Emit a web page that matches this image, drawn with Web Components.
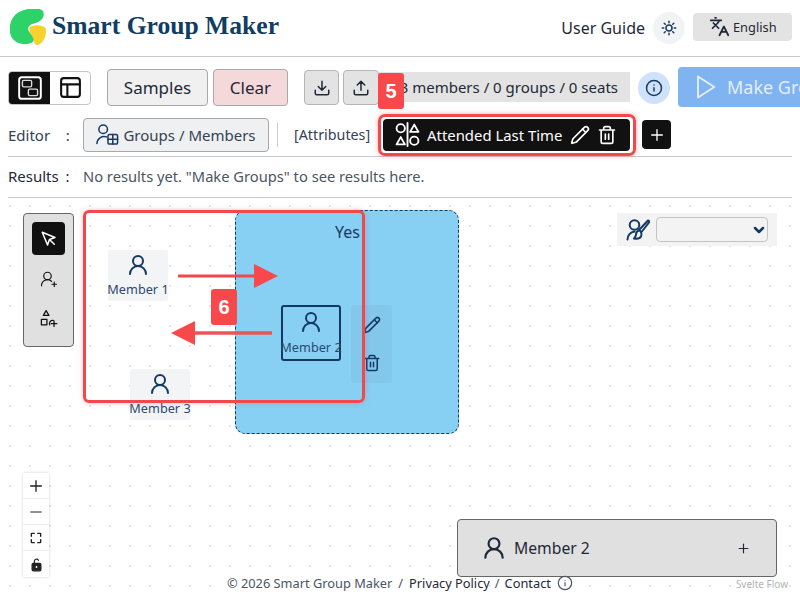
<!DOCTYPE html>
<html lang="en"><head><meta charset="utf-8"><title>Smart Group Maker</title>
<style>
html,body{margin:0;padding:0;width:800px;height:600px;overflow:hidden;background:#fff;font-family:"Noto Sans","Liberation Sans",sans-serif;color:#1f2937}
body{display:flex;flex-direction:column}
</style></head><body>
<sg-header></sg-header>
<sg-toolbar></sg-toolbar>
<sg-editor></sg-editor>
<sg-results></sg-results>
<sg-canvas></sg-canvas>
<script>
const P={
user:'<circle cx="12" cy="8" r="5"/><path d="M20 21a8 8 0 0 0-16 0"/>',
userplus:'<path d="M2 21a8 8 0 0 1 13.3-6"/><circle cx="10" cy="8" r="5"/><path d="M19 16v6M22 19h-6"/>',
shapesplus:'<path d="M9 2l3.500 6h-7z"/><rect x="3" y="13" width="7" height="7"/><path d="M18 14.500a4 4 0 0 0-4.500 5.500"/><path d="M19 15v7M15.500 18.500h7"/>',
groupmem:'<circle cx="7.500" cy="6.500" r="4.500"/><path d="M1 21.500a7.500 7.500 0 0 1 10-7"/><rect x="12.500" y="12" width="10" height="10" rx="1.500"/><path d="M17.500 12v10M12.500 17h10"/>',
cursor:'<path d="M3 3l7.070 16.970 2.510-7.390 7.390-2.510L3 3z"/><path d="M13 13l6 6"/>',
pencil:'<path d="M21.170 6.810a1 1 0 0 0-3.980-3.990L3.840 16.170a2 2 0 0 0-.5.830l-1.320 4.350a.5.5 0 0 0 .62.620l4.350-1.320a2 2 0 0 0 .83-.5z"/><path d="m15 5 4 4"/>',
trash:'<path d="M3 6h18M19 6v14c0 1-1 2-2 2H7c-1 0-2-1-2-2V6M8 6V4c0-1 1-2 2-2h4c1 0 2 1 2 2v2M10 11v6M14 11v6"/>',
download:'<path d="M21 15v4a2 2 0 0 1-2 2H5a2 2 0 0 1-2-2v-4M7 10l5 5 5-5M12 15V3"/>',
upload:'<path d="M21 15v4a2 2 0 0 1-2 2H5a2 2 0 0 1-2-2v-4M17 8l-5-5-5 5M12 3v12"/>',
sun:'<circle cx="12" cy="12" r="4"/><path d="M12 3v2M12 19v2M3 12h2M19 12h2M5.600 5.600l1.400 1.400M17 17l1.400 1.400M5.600 18.400L7 17M17 7l1.400-1.400"/>',
lang:'<path d="M5 8l6 6M4 14l6-6 2-3M2 5h12M7 2h1M22 22l-5-10-5 10M14 18h6"/>',
play:'<path d="M6 3l14 9-14 9z"/>',
info:'<circle cx="12" cy="12" r="10"/><path d="M12 16v-4.500M12 8h.01"/>',
attrs:'<circle cx="5.500" cy="6" r="4"/><path d="M1.500 21.500l4-7 4 7zM18.500 2.500l4 7h-8z"/><circle cx="18.500" cy="18" r="4"/><path d="M12 1v22"/>',
board:'<rect x="2" y="2" width="20" height="20" rx="2.500"/><g stroke-width="1.300" opacity=".85"><rect x="5" y="5" width="8.500" height="6" rx="1.200"/><rect x="10.500" y="13" width="8.500" height="6" rx="1.200"/></g>',
table:'<rect x="3" y="3" width="18" height="18" rx="2.500"/><path d="M3 9h18M9 9v12"/>',
plus:'<path d="M12 4v16M4 12h16"/>',
minus:'<path d="M4 12h16"/>',
fit:'<path d="M4 9V5a1 1 0 0 1 1-1h4M15 4h4a1 1 0 0 1 1 1v4M20 15v4a1 1 0 0 1-1 1h-4M9 20H5a1 1 0 0 1-1-1v-4"/>',
lock:'<path d="M8.500 10V7a3.500 3.500 0 0 1 6.500-1.800" /><rect x="5" y="10" width="14" height="12" rx="2" fill="currentColor"/><circle cx="12" cy="16" r="1.500" fill="#fff" stroke="none"/>',
userbrush:'<circle cx="8.500" cy="7" r="4.800"/><path d="M1.500 21.500a8 8 0 0 1 7-8"/><path d="M22 2.500c1 0 1.500 1 1 2l-7.500 9.500-2.500-2z"/><path d="M13 12.500c-2 .5-3 2-3 4 0 2-1 3-2 4 3 .5 6 0 7-2 .7-1.500.7-3 0-4"/>'
};
class SgIcon extends HTMLElement{
  connectedCallback(){
    const s=this.getAttribute('size')||20, w=this.getAttribute('sw')||2;
    this.attachShadow({mode:'open'}).innerHTML=`<style>:host{display:inline-flex;flex:none;line-height:0}svg{display:block}</style>
    <svg xmlns="http://www.w3.org/2000/svg" width="${s}" height="${s}" viewBox="0 0 24 24" fill="none" stroke="currentColor" stroke-width="${w}" stroke-linecap="round" stroke-linejoin="round">${P[this.getAttribute('name')]}</svg>`;
  }
}
customElements.define('sg-icon',SgIcon);
function def(tag,html){
  customElements.define(tag,class extends HTMLElement{
    constructor(){super();this.attachShadow({mode:'open'}).innerHTML=html}
  });
}
def('sg-btn',`<style>
:host{display:inline-flex;align-items:center;justify-content:center;gap:6px;box-sizing:border-box;height:37px;padding:0 17px;background:#f0f0f0;border:1px solid #a8a8a8;border-radius:4px;font-size:17px;color:#1f2937;flex:none}
:host([tone=red]){background:#f5d9da}
:host([icon]){width:35px;height:35px;padding:0;background:#e3e3e3;border-color:#b5b5b5}
</style><slot></slot>`);
def('sg-badge',`<style>
:host{position:absolute;display:flex;align-items:center;justify-content:center;width:26px;height:36px;background:#f9484c;border-radius:3px;color:#fff;font:700 20px "Liberation Sans",sans-serif;z-index:6}
</style><slot></slot>`);
def('sg-header',`<style>
:host{display:flex;align-items:center;box-sizing:border-box;height:57px;padding:0 8px 1px 10px;border-bottom:1px solid #c8c8c8;flex:none}
svg{display:block;flex:none}
h1{margin:0 0 3px 6px;font:700 25.600px "Liberation Serif",serif;color:#0f3d63;flex:1;white-space:nowrap}
.guide{font-size:16px;color:#1f2937;margin-right:8px}
.theme{width:32px;height:32px;border-radius:50%;background:#f1f3f5;display:flex;align-items:center;justify-content:center;margin-right:8px;color:#1e3a5f}
.lang{box-sizing:border-box;width:99px;height:28px;border-radius:4px;background:#e3e3e3;display:flex;align-items:center;gap:3px;padding:0 0 0 16px;font-size:12.800px;color:#1f2937;margin-top:-2px}
</style>
<svg width="36" height="37" viewBox="10 10 36 37"><path fill="#2dd268" d="M43 12C39 8 27 9 19 13C10 18 8 30 11 37C14 44 24 47 31 44C35 42 35 38 31 35C27 31 27 27 32 25C39 24 46 19 43 12Z"/><path fill="#f7d22c" d="M30 28C35 25 46 26 46 31C46 37 44 42 40 45C37 47 34 46 34 42C34 38 27 32 30 28Z"/></svg>
<h1>Smart Group Maker</h1>
<span class="guide">User Guide</span>
<span class="theme"><sg-icon name="sun" size="18"></sg-icon></span>
<span class="lang"><sg-icon name="lang" size="21"></sg-icon>English</span>`);
def('sg-toolbar',`<style>
:host{display:flex;align-items:center;box-sizing:border-box;height:53px;padding:8px 0 0 8px;flex:none;overflow:hidden;color:#1f2937}
.seg{display:flex;box-sizing:border-box;width:83px;height:34px;border:1px solid #c4c4c4;border-radius:4px;overflow:hidden;margin-right:16px;flex:none}
.seg span{display:flex;align-items:center;justify-content:center;color:#111}
.seg span:first-child{width:41px;background:#111;color:#fff}
.seg span:last-child{flex:1}
sg-btn.s{width:101px;padding:0;margin-right:5px}
sg-btn.c{width:75px;padding:0;margin-right:16px}
sg-btn.u{margin-right:4px}
.stat{box-sizing:border-box;width:251px;height:30px;background:#e3e3e3;display:flex;align-items:center;justify-content:flex-end;padding-right:12px;font-size:15px;margin-top:-1px;white-space:nowrap;overflow:hidden;flex:none}
.info{width:32px;height:32px;border-radius:50%;background:#cfe2fb;display:flex;align-items:center;justify-content:center;margin:0 8px;color:#173a63;flex:none}
.make{box-sizing:border-box;width:140px;height:40px;background:#7fb4f1;border-radius:4px;color:#e4eefb;display:flex;align-items:center;gap:8px;padding-left:13px;font-size:18px;white-space:nowrap;margin-top:-1px;flex:none;overflow:hidden}
</style>
<div class="seg"><span><sg-icon name="board" size="26" sw="1.800"></sg-icon></span><span><sg-icon name="table" size="25" sw="2"></sg-icon></span></div>
<sg-btn class="s">Samples</sg-btn><sg-btn class="c" tone="red">Clear</sg-btn>
<sg-btn icon class="u"><sg-icon name="download" size="18"></sg-icon></sg-btn>
<sg-btn icon style="width:36px"><sg-icon name="upload" size="18"></sg-icon></sg-btn>
<div class="stat">3 members / 0 groups / 0 seats</div>
<span class="info"><sg-icon name="info" size="18"></sg-icon></span>
<div class="make"><sg-icon name="play" size="28" sw="1.600"></sg-icon>Make Groups</div>`);
def('sg-editor',`<style>
:host{display:flex;align-items:center;box-sizing:border-box;height:47px;margin:0 8px;border-bottom:1px solid #c8c8c8;padding-top:3px;flex:none;font-size:15px;color:#374151;position:relative}
.lb{width:75px;white-space:pre;flex:none}
sg-btn{width:186px;height:34px;font-size:15px;padding:0;background:#eef0f2;color:#374151;gap:4px}
sg-btn sg-icon{color:#1b3a63}
.sep{width:1px;height:24px;background:#ccc;margin:0 16px 0 8px}
.at{width:89px;font-size:14.300px;color:#374151;white-space:nowrap}
.chip{box-sizing:border-box;width:247px;height:32px;background:#111;border-radius:4px;color:#fff;display:flex;align-items:center;padding-left:12px;font-size:14.900px;gap:7px;white-space:nowrap}
.chip .t{margin-right:1px}
.pl{width:29px;height:29px;background:#111;border-radius:4px;color:#fff;display:flex;align-items:center;justify-content:center;margin-left:12px}
.ring{position:absolute;left:370px;top:4px;width:258px;height:42px;box-sizing:border-box;border:3px solid #f0484c;border-radius:7px;box-shadow:0 0 5px rgba(240,72,76,.45);z-index:5}
</style>
<span class="lb">Editor    :</span>
<sg-btn><sg-icon name="groupmem" size="23" sw="1.600"></sg-icon>Groups / Members</sg-btn>
<span class="sep"></span><span class="at">[Attributes]</span>
<div class="chip"><sg-icon name="attrs" size="25" sw="1.800"></sg-icon><span class="t">Attended Last Time</span><sg-icon name="pencil" size="20"></sg-icon><sg-icon name="trash" size="20"></sg-icon></div>
<span class="pl"><sg-icon name="plus" size="16"></sg-icon></span>
<span class="ring"></span>
<sg-badge style="left:370px;top:-37px">5</sg-badge>`);
def('sg-results',`<style>
:host{display:flex;align-items:center;box-sizing:border-box;height:41px;margin:0 8px;border-bottom:1px solid #c8c8c8;padding-bottom:2px;flex:none;font-size:15px;color:#374151}
b{font-weight:400;width:75px;color:#1f2937;flex:none;word-spacing:3px}
span{font-size:14.700px;color:#4b5563;white-space:nowrap}
</style><b>Results :</b><span>No results yet. "Make Groups" to see results here.</span>`);
def('sg-node',`<style>
:host{position:absolute;box-sizing:border-box;width:60px;height:51px;background:#f3f4f6;border-radius:2px;display:flex;flex-direction:column;align-items:center;padding-top:3px;color:#123a63;font-size:12.700px;white-space:nowrap}
:host([sel]){background:transparent;border:2px solid #123a63;height:56px;padding-top:3px;border-radius:3px}
:host([sel]) span{margin-top:4px}
span{line-height:18px;margin-top:3px;color:#2b4a6f}
</style><sg-icon name="user" size="24"></sg-icon><span><slot></slot></span>`);
def('sg-canvas',`<style>
:host{display:block;position:relative;flex:1;overflow:hidden;background-color:#fff;background-image:radial-gradient(circle,#e6e6e6 1px,transparent 1.300px);background-size:20px 20px;background-position:0 -2px;color:#111}
.tools{position:absolute;left:23px;top:15px;width:51px;height:134px;box-sizing:border-box;background:#e0e0e0;border:1px solid #666;border-radius:4px;display:flex;flex-direction:column;align-items:center;padding-top:8px;gap:7px}
.tools span{width:33px;height:33px;border-radius:4px;display:flex;align-items:center;justify-content:center}
.tools .on{background:#111;color:#fff}
.group{position:absolute;left:235px;top:12px;width:224px;height:224px;box-sizing:border-box;background:#87cff3;border:1px dashed #123a63;border-radius:10px;color:#1e3a5f;display:flex;justify-content:flex-end;padding:10px 98px 0 0;font-size:16px}
.ntb{position:absolute;left:351px;top:107px;width:41px;height:78px;background:rgba(90,120,140,.08);border-radius:3px;display:flex;flex-direction:column;align-items:center;justify-content:center;gap:20px;color:#123a63}
.anno{position:absolute;left:83px;top:12px;width:282px;height:193px;box-sizing:border-box;border:3px solid #f0484c;border-radius:6px;box-shadow:0 0 5px rgba(240,72,76,.35);z-index:4}
svg.arrows{position:absolute;left:0;top:0;z-index:4}
.sel{position:absolute;left:617px;top:15px;width:160px;height:33px;background:#f3f3f3;display:flex;align-items:center;padding-left:9px;gap:6px;color:#123a63;box-sizing:border-box}
.sel .box{width:112px;height:25px;box-sizing:border-box;border:1px solid #c4c4c4;border-radius:4px;display:flex;align-items:center;justify-content:flex-end;padding-right:1px}
.ctl{position:absolute;left:23px;top:275px;width:26px;background:#fff;box-shadow:0 0 3px rgba(0,0,0,.18);display:flex;flex-direction:column}
.ctl span{height:26px;box-sizing:border-box;display:flex;align-items:center;justify-content:center;border-bottom:1px solid #eee;color:#222}
.member{position:absolute;left:457px;top:321px;width:320px;height:58px;box-sizing:border-box;background:#e0e0e0;border:1px solid #666;border-radius:4px;display:flex;align-items:center;padding:0 26px 0 23px;font-size:15.700px;color:#1f2937;gap:7px;z-index:1}
.member .n{flex:1}
footer{position:absolute;left:227px;top:376px;font-size:12.800px;color:#4b5563;white-space:nowrap;display:flex;align-items:center;gap:6px;z-index:2}
footer a{color:#1f2937}
.sf{position:absolute;right:12px;top:379px;font:10px "Noto Sans",sans-serif;color:#b4b4b4}
</style>
<div class="group">Yes</div>
<sg-node style="left:108px;top:52px">Member 1</sg-node>
<sg-node sel style="left:281px;top:107px">Member 2</sg-node>
<sg-node style="left:130px;top:171px">Member 3</sg-node>
<div class="ntb"><sg-icon name="pencil" size="18"></sg-icon><sg-icon name="trash" size="18"></sg-icon></div>
<div class="tools"><span class="on"><sg-icon name="cursor" size="18"></sg-icon></span><span><sg-icon name="userplus" size="18" sw="1.600"></sg-icon></span><span><sg-icon name="shapesplus" size="19" sw="1.600"></sg-icon></span></div>
<div class="sel"><sg-icon name="userbrush" size="24"></sg-icon><div class="box"><svg width="14" height="14" viewBox="0 0 14 14" fill="none" stroke="#123a63" stroke-width="2.500" stroke-linecap="round" stroke-linejoin="round"><path d="M3 5l4 4 4-4"/></svg></div></div>
<div class="anno"></div>
<svg class="arrows" width="800" height="402"><path d="M178 78H256" stroke="#f0484c" stroke-width="3"/><path d="M254 66l24 12-24 12z" fill="#f9484c"/><path d="M272 135H192" stroke="#ea5558" stroke-width="3.500"/><path d="M195 123l-24 12 24 12z" fill="#f9484c"/></svg>
<sg-badge style="left:211px;top:91px">6</sg-badge>
<div class="ctl"><span><sg-icon name="plus" size="16"></sg-icon></span><span><sg-icon name="minus" size="16" sw="1.500"></sg-icon></span><span><sg-icon name="fit" size="14" sw="2.400"></sg-icon></span><span style="border:0"><sg-icon name="lock" size="15"></sg-icon></span></div>
<div class="member"><sg-icon name="user" size="26"></sg-icon><span class="n">Member 2</span><sg-icon name="plus" size="13" sw="2.200"></sg-icon></div>
<footer><span>© 2026 Smart Group Maker</span><span>/</span><a>Privacy Policy</a><span style="margin-left:-1px">/</span><a style="margin-left:-1px">Contact</a><sg-icon name="info" size="16" sw="1.800"></sg-icon></footer>
<div class="sf">Svelte Flow</div>`);
</script>
</body></html>
